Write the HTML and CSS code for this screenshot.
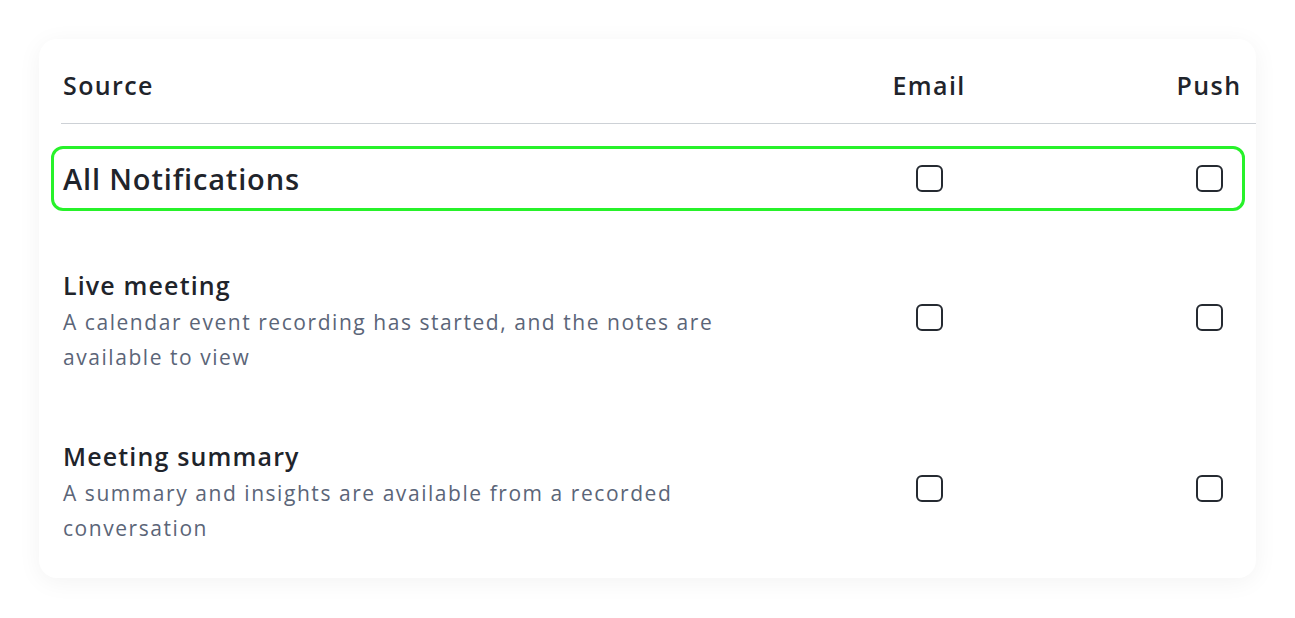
FILE: index.html
```html
<!DOCTYPE html>
<html lang="en">
<head>
    <meta charset="UTF-8">
    <meta name="viewport" content="width=device-width, initial-scale=1.0">
    <title>Notification settings</title>
    <link rel="stylesheet" href="styles.css">
</head>
<body>

    <div class="card">
        <div class="head">
            <span class="col-source">Source</span>
            <span class="col-check">Email</span>
            <span class="col-check">Push</span>
        </div>

        <div class="row all">
            <span class="all-label">All Notifications</span>
            <span class="col-check"><span class="box"></span></span>
            <span class="col-check"><span class="box"></span></span>
        </div>

        <div class="row">
            <div class="info">
                <h3>Live meeting</h3>
                <p>A calendar event recording has started, and the notes are<br>available to view</p>
            </div>
            <span class="col-check"><span class="box"></span></span>
            <span class="col-check"><span class="box"></span></span>
        </div>

        <div class="row">
            <div class="info">
                <h3>Meeting summary</h3>
                <p>A summary and insights are available from a recorded<br>conversation</p>
            </div>
            <span class="col-check"><span class="box"></span></span>
            <span class="col-check"><span class="box"></span></span>
        </div>
    </div>

</body>
</html>
```

FILE: styles.css
```css
body{
    margin: 0;
    padding: 39px;
    background: #fff;
    font-family: "Open Sans", Lato, sans-serif;
    color: #1f242b;
}

.card{
    width: 1217px;
    height: 539px;
    box-sizing: border-box;
    padding: 0 0 0 22px;
    background: #fff;
    border-radius: 18px;
    box-shadow: 0 4px 24px rgba(0, 0, 0, 0.05);
}

.head, .row{
    display: grid;
    grid-template-columns: minmax(0, 1fr) 66px 66px;
    column-gap: 214px;
    align-items: center;
}
.head{
    padding: 30px 14px 0 2px;
    height: 54px;
    align-items: start;
    font-size: 25px;
    line-height: 32px;
    font-weight: 600;
    letter-spacing: 1.4px;
    border-bottom: 1px solid #cdd1d6;
}

.col-check{
    display: flex;
    justify-content: center;
    white-space: nowrap;
}

.row{
    margin: 0 11px 0 -10px;
    padding: 0 0 0 9px;
    border: 3px solid transparent;
    border-radius: 12px;
}
.row.all{
    margin-top: 22px;
    height: 59px;
    border-color: #27f22a;
}
.all-label{
    font-size: 29px;
    line-height: 36px;
    font-weight: 600;
    letter-spacing: 0.85px;
}

.info h3{
    margin: 0 0 4px;
    font-size: 25px;
    line-height: 32px;
    font-weight: 600;
    letter-spacing: 1.15px;
}
.info p{
    margin: 0;
    font-size: 21px;
    line-height: 35px;
    letter-spacing: 1.55px;
    white-space: nowrap;
    color: #5b6578;
}
.row + .row{
    margin-top: 55px;
}
.row + .row + .row{
    margin-top: 59px;
}
.row + .row .col-check{
    margin-bottom: 9px;
}

.box{
    width: 23px;
    height: 23px;
    border: 2px solid #252a31;
    border-radius: 6px;
}
```
